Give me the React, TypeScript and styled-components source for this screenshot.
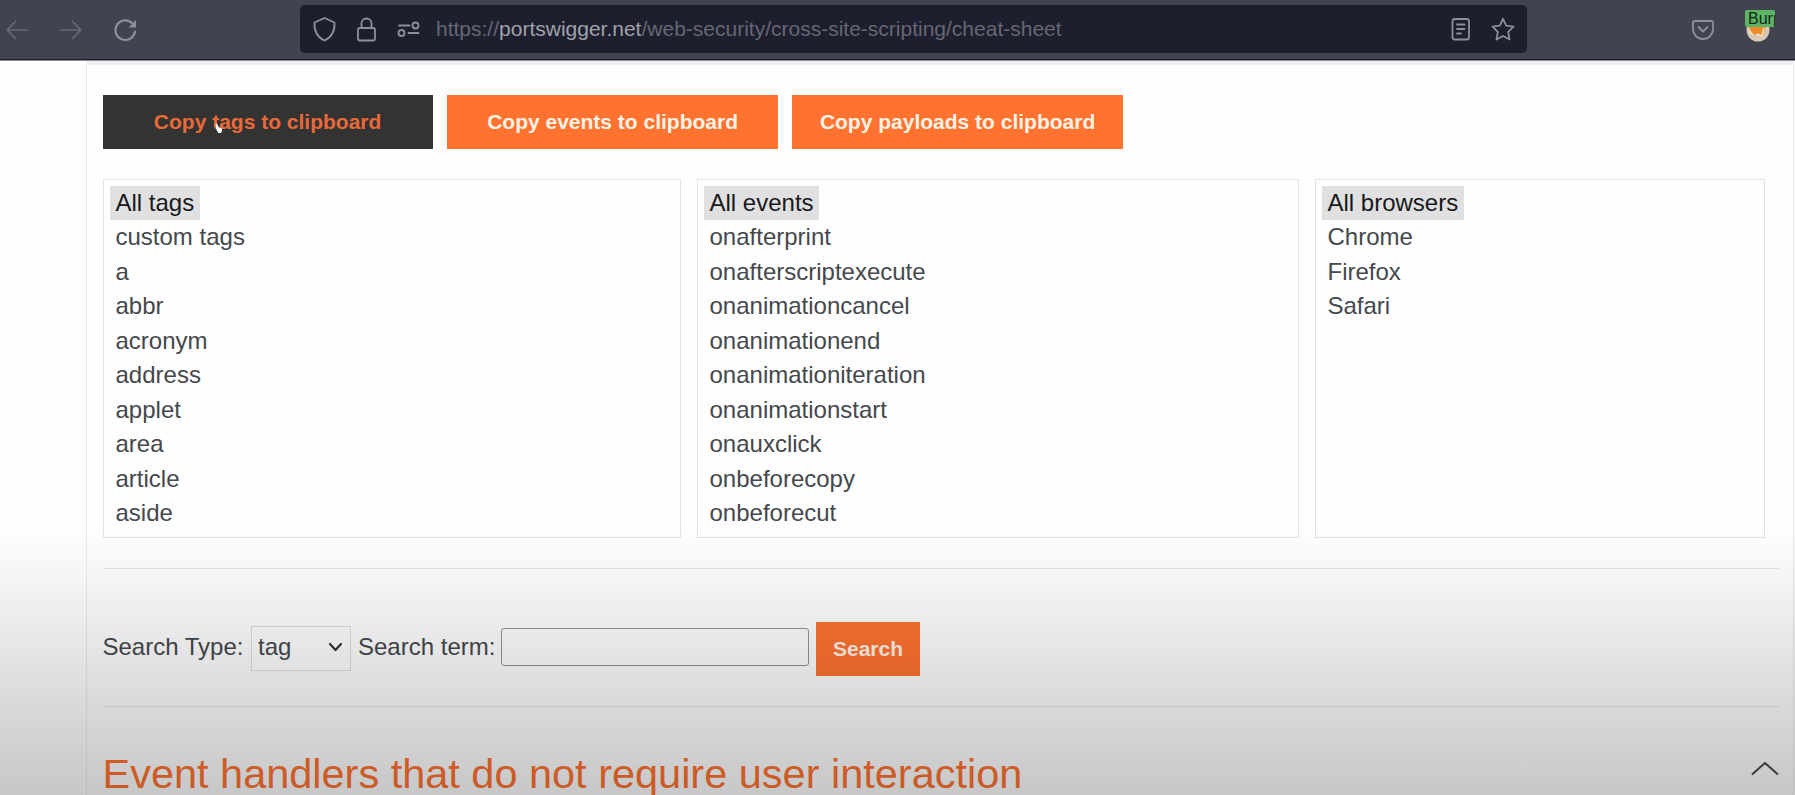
import React from 'react';
import styled, { createGlobalStyle } from 'styled-components';

const Global = createGlobalStyle`
  * { box-sizing: border-box; }
  html, body { margin: 0; height: 795px; overflow: hidden; background: #fefefe; }
  body { font-family: "Liberation Sans", Arial, sans-serif; }
`;

const Window = styled.div`
  position: relative;
  width: 1795px;
  height: 795px;
  overflow: hidden;
  display: flex;
  flex-direction: column;
`;

const Toolbar = styled.header`
  height: 61px;
  flex: none;
  display: flex;
  align-items: flex-start;
  padding: 5px 0 0 0;
  background: #41434f;
  border-bottom: 1px solid #8d8e98;
  box-shadow: inset 0 -1px 0 #1c1b2c;
  color: #8e8f9a;
`;

const NavGroup = styled.nav`
  width: 300px;
  height: 49px;
  display: flex;
  align-items: center;
  svg { display: block; flex: none; }
`;

const UrlBar = styled.div`
  width: 1227px;
  height: 48px;
  border-radius: 5px;
  background: #1d1f2e;
  display: flex;
  align-items: center;
  padding: 0 1px 0 11px;
  svg { display: block; flex: none; }
`;

const Address = styled.div`
  flex: 1;
  margin-left: 15px;
  font-size: 21px;
  line-height: 24px;
  color: #666773;
  white-space: nowrap;
  b { font-weight: 400; color: #a0a1aa; }
`;

const Extensions = styled.div`
  height: 49px;
  display: flex;
  align-items: center;
  padding-left: 164px;
  gap: 30px;
  svg { display: block; }
`;

const BurpIcon = styled.div`
  position: relative;
  width: 32px;
  height: 40px;
  svg { position: absolute; left: 1px; top: 9px; }
`;

const BurpBadge = styled.span`
  position: absolute;
  left: 0;
  top: 0;
  width: 30px;
  height: 17px;
  overflow: hidden;
  border-radius: 2px;
  background: #5cb565;
  color: #10251a;
  font-size: 16px;
  line-height: 17px;
  padding-left: 3px;
`;

const Page = styled.main`
  flex: 1;
  margin-left: 86px;
  width: 1708px;
  padding: 30px 14px 0 15.5px;
  border: 1px solid #ececee;
  border-width: 4px 1px 0 1px;
  border-top-color: #efeff1;
  color: #45484c;
`;

const ButtonRow = styled.div`
  display: flex;
  gap: 14.8px;
`;

const Button = styled.button<{ $width: number; $active?: boolean }>`
  width: ${p => p.$width}px;
  height: 54px;
  padding: 0;
  border: 0;
  background: ${p => (p.$active ? '#333332' : '#ff7230')};
  color: ${p => (p.$active ? '#e8693a' : '#fff3e6')};
  font: 700 21px/54px "Liberation Sans", Arial, sans-serif;
`;

const Lists = styled.div`
  display: flex;
  gap: 16px;
  margin-top: 30px;
`;

const List = styled.ul<{ $width: number }>`
  list-style: none;
  margin: 0;
  width: ${p => p.$width}px;
  height: 359px;
  border: 1px solid #e3e3e4;
  padding: 6px;
  display: flex;
  flex-direction: column;
  align-items: flex-start;
`;

const Option = styled.li<{ $selected: boolean }>`
  height: 34.45px;
  padding: 0 5.5px 0 6px;
  font-size: 24px;
  line-height: 34.45px;
  white-space: nowrap;
  color: ${p => (p.$selected ? '#17191c' : '#45484c')};
  background: ${p => (p.$selected ? '#e0e0e0' : 'transparent')};
`;

const Rule = styled.hr<{ $top: number }>`
  margin: ${p => p.$top}px 0 0;
  border: 0;
  height: 1px;
  background: #e8e8e8;
`;

const SearchRow = styled.form`
  display: flex;
  align-items: center;
  height: 54px;
  margin-top: 53px;
  font-size: 24px;
  white-space: nowrap;
`;

const Label = styled.label<{ $width: number }>`
  width: ${p => p.$width}px;
  line-height: 28px;
  margin-top: -4px;
`;

const SelectBox = styled.div`
  width: 100.5px;
  height: 45px;
  margin: -2px 7px 0 0;
  padding: 0 7px 2px 6.5px;
  border: 1px solid #dedede;
  display: flex;
  align-items: center;
  justify-content: space-between;
`;

const TextInput = styled.input`
  width: 308px;
  height: 38px;
  margin: -4px 7px 0 0;
  border: 1.5px solid #949496;
  border-radius: 3px;
  background: transparent;
`;

const Heading = styled.h2`
  margin: 43px 0 0;
  font-size: 41.48px;
  line-height: 48px;
  font-weight: 400;
  color: #ff7230;
  white-space: nowrap;
`;

/* Darkening towards the bottom edge of the window */
const Shade = styled.div`
  position: absolute;
  inset: 525px 0 0 0;
  pointer-events: none;
  background: linear-gradient(rgba(0,0,0,0), rgba(0,0,0,.03) 17%, rgba(0,0,0,.15) 68%, rgba(0,0,0,.215));
`;

const Pointer = styled.svg`
  position: absolute;
  left: 214px;
  top: 122px;
`;

const ToTop = styled.svg`
  position: absolute;
  left: 1749px;
  top: 758px;
`;

const tags = ['All tags', 'custom tags', 'a', 'abbr', 'acronym', 'address', 'applet', 'area', 'article', 'aside'];
const events = ['All events', 'onafterprint', 'onafterscriptexecute', 'onanimationcancel', 'onanimationend', 'onanimationiteration', 'onanimationstart', 'onauxclick', 'onbeforecopy', 'onbeforecut'];
const browsers = ['All browsers', 'Chrome', 'Firefox', 'Safari'];

const ListBox = ({ items, width }: { items: string[]; width: number }) => (
  <List $width={width}>
    {items.map((item, i) => <Option key={item} $selected={i === 0}>{item}</Option>)}
  </List>
);

const stroke = { fill: 'none', stroke: 'currentColor', strokeWidth: 1.8, strokeLinecap: 'round', strokeLinejoin: 'round' } as const;

export default function App() {
  return (
    <Window>
      <Global />
      <Toolbar>
        <NavGroup>
          <svg width="150" height="49" viewBox="0 5 150 49" {...stroke}>
            <g stroke="#676975" strokeWidth="1.7">
              <path d="M27 30H7M15.500 21.500L7 30L15.500 38.500" />
              <path d="M61 30H81M72.500 21.500L81 30L72.500 38.500" />
            </g>
            <path d="M132.500 23.500A9.800 9.800 0 1 0 135 31.500" strokeWidth="2.200" />
            <path d="M136 20V27.500H128.500Z" fill="currentColor" stroke="none" />
          </svg>
        </NavGroup>
        <UrlBar>
          <svg width="110" height="48" viewBox="311 5 110 48" {...stroke}>
            <path d="M324.500 18L334.500 22.500C335 30 333 36.500 324.500 40.500C316 36.500 314 30 314.500 22.500Z" />
            <rect x="358" y="28" width="17" height="12.500" rx="2" />
            <path d="M361.500 28V23.500A5 5 0 0 1 371.500 23.500V28" />
            <path d="M399 25.500H409.500M408.500 33H418.500" />
            <circle cx="415.500" cy="25.500" r="3" />
            <circle cx="401.500" cy="33" r="3" />
          </svg>
          <Address>https://<b>portswigger.net</b>/web-security/cross-site-scripting/cheat-sheet</Address>
          <svg width="76" height="48" viewBox="1451 5 76 48" {...stroke}>
            <rect x="1453.500" y="19" width="16.500" height="20.500" rx="2.500" />
            <path d="M1458 24.500H1465.500M1458 29H1465.500M1458 33.500H1462" />
            <path d="M1504 18.800L1507.200 25.600L1514.500 26.600L1509.200 31.800L1510.500 39.500L1504 36L1497.500 39.500L1498.800 31.800L1493.500 26.600L1500.800 25.600Z" />
          </svg>
        </UrlBar>
        <Extensions>
          <svg width="24" height="24" viewBox="0 0 24 24" {...stroke}>
            <path d="M4 3H20Q22 3 22 5V11A10 10 0 0 1 2 11V5Q2 3 4 3ZM7.500 9L12 13.500L16.500 9" />
          </svg>
          <BurpIcon>
            <svg width="24" height="24" viewBox="0 0 24 24">
              <circle cx="12" cy="11" r="11.500" fill="#d9c9b4" />
              <path d="M3 8H20L17 17L11 15L6 16Z" fill="#f18a2b" />
              <path d="M3 11L7 16M18 9L16 17L11 15" fill="none" stroke="#f8e3c4" strokeWidth="1.500" />
            </svg>
            <BurpBadge>Burp</BurpBadge>
          </BurpIcon>
        </Extensions>
      </Toolbar>
      <Page>
        <ButtonRow>
          <Button $width={330.2} $active>Copy tags to clipboard</Button>
          <Button $width={330.2}>Copy events to clipboard</Button>
          <Button $width={330.2}>Copy payloads to clipboard</Button>
        </ButtonRow>
        <Lists>
          <ListBox items={tags} width={578} />
          <ListBox items={events} width={602} />
          <ListBox items={browsers} width={450} />
        </Lists>
        <Rule $top={30} />
        <SearchRow>
          <Label $width={148}>Search Type:</Label>
          <SelectBox>
            tag
            <svg width="15" height="11" viewBox="0 0 15 11" {...stroke} strokeWidth="2.200" stroke="#303236"><path d="M2 2L7.500 8L13 2" /></svg>
          </SelectBox>
          <Label $width={143}>Search term:</Label>
          <TextInput />
          <Button type="button" $width={104}>Search</Button>
        </SearchRow>
        <Rule $top={30} />
        <Heading>Event handlers that do not require user interaction</Heading>
      </Page>
      <Pointer width="10" height="12" viewBox="0 0 10 12"><path d="M1.500 2L3 1.500L4.500 5L8 6.500V9L7 11H4.500L2.500 8Z" fill="#fff" /></Pointer>
      <Shade />
      <ToTop width="32" height="20" viewBox="0 0 32 20" fill="none" stroke="#3c3c3c" strokeWidth="2"><path d="M3 16.500L16 5L29 16.500" /></ToTop>
    </Window>
  );
}
